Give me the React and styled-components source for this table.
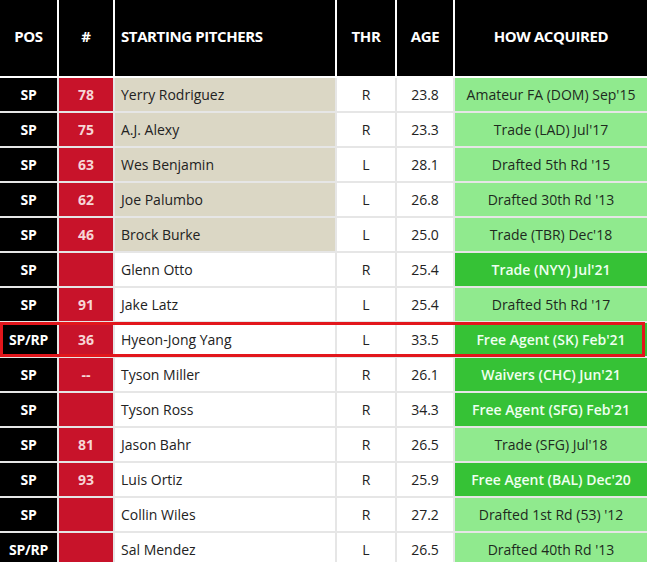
import React from "react";
import styled, { createGlobalStyle } from "styled-components";

const GlobalStyle = createGlobalStyle`
  html, body { margin: 0; padding: 0; background: #ffffff; overflow: hidden; }
  body { font-family: "Open Sans", "Noto Sans", "Liberation Sans", sans-serif; }
`;

const COLS = "57px 54px 220px 58px 56px 192px";

const Table = styled.div`
  width: 647px;
  display: flex;
  flex-direction: column;
  gap: 2px;
  background: #ffffff;
`;

const HeaderRow = styled.div`
  display: grid;
  grid-template-columns: ${COLS};
  column-gap: 2px;
  height: 76px;
  background: #ffffff;
`;

const HeadCell = styled.div`
  background: #000000;
  color: #ffffff;
  font-weight: 700;
  font-size: 15px;
  letter-spacing: -0.4px;
  display: flex;
  align-items: center;
  padding-bottom: 5px;
  box-sizing: border-box;
  justify-content: ${(p) => (p.$left ? "flex-start" : "center")};
  padding-left: ${(p) => (p.$left ? "6px" : "0")};
`;

const Body = styled.div`
  display: flex;
  flex-direction: column;
  gap: 2px;
  background: #e6e6e6;
`;

const Row = styled.div`
  position: relative;
  display: grid;
  grid-template-columns: ${COLS};
  column-gap: 2px;
  height: 33px;
  background: #e6e6e6;
  &::after {
    content: "";
    display: ${(p) => (p.$highlight ? "block" : "none")};
    position: absolute;
    left: 0;
    right: 2px;
    top: -1px;
    bottom: -1px;
    border: 3px solid #e2161c;
    pointer-events: none;
  }
`;

const Cell = styled.div`
  display: flex;
  align-items: center;
  font-size: 14px;
  letter-spacing: 0;
  white-space: nowrap;
  overflow: hidden;
`;

const PosCell = styled(Cell)`
  background: #000000;
  color: #ffffff;
  font-weight: 700;
  letter-spacing: -0.3px;
  justify-content: center;
`;

const NumCell = styled(Cell)`
  background: #c8132a;
  color: #f6d6d6;
  font-weight: 700;
  justify-content: center;
`;

const NameCell = styled(Cell)`
  background: ${(p) => (p.$prospect ? "#dbd7c5" : "#ffffff")};
  color: #222222;
  padding-left: 6px;
`;

const CenterCell = styled(Cell)`
  background: #ffffff;
  color: #222222;
  justify-content: center;
`;

const HowCell = styled(Cell)`
  background: ${(p) => (p.$recent ? "#36c236" : "#90ea8e")};
  color: ${(p) => (p.$recent ? "#effff0" : "#1e2a1e")};
  font-weight: ${(p) => (p.$recent ? 600 : 400)};
  justify-content: center;
`;

const rows = [
  ["SP", "78", "Yerry Rodriguez", "R", "23.8", "Amateur FA (DOM) Sep'15", true, false],
  ["SP", "75", "A.J. Alexy", "R", "23.3", "Trade (LAD) Jul'17", true, false],
  ["SP", "63", "Wes Benjamin", "L", "28.1", "Drafted 5th Rd '15", true, false],
  ["SP", "62", "Joe Palumbo", "L", "26.8", "Drafted 30th Rd '13", true, false],
  ["SP", "46", "Brock Burke", "L", "25.0", "Trade (TBR) Dec'18", true, false],
  ["SP", "", "Glenn Otto", "R", "25.4", "Trade (NYY) Jul'21", false, true],
  ["SP", "91", "Jake Latz", "L", "25.4", "Drafted 5th Rd '17", false, false],
  ["SP/RP", "36", "Hyeon-Jong Yang", "L", "33.5", "Free Agent (SK) Feb'21", false, true, true],
  ["SP", "--", "Tyson Miller", "R", "26.1", "Waivers (CHC) Jun'21", false, true],
  ["SP", "", "Tyson Ross", "R", "34.3", "Free Agent (SFG) Feb'21", false, true],
  ["SP", "81", "Jason Bahr", "R", "26.5", "Trade (SFG) Jul'18", false, false],
  ["SP", "93", "Luis Ortiz", "R", "25.9", "Free Agent (BAL) Dec'20", false, true],
  ["SP", "", "Collin Wiles", "R", "27.2", "Drafted 1st Rd (53) '12", false, false],
  ["SP/RP", "", "Sal Mendez", "L", "26.5", "Drafted 40th Rd '13", false, false],
];

export default function App() {
  return (
    <>
      <GlobalStyle />
      <Table>
        <HeaderRow>
          <HeadCell>POS</HeadCell>
          <HeadCell>#</HeadCell>
          <HeadCell $left>STARTING PITCHERS</HeadCell>
          <HeadCell>THR</HeadCell>
          <HeadCell>AGE</HeadCell>
          <HeadCell>HOW ACQUIRED</HeadCell>
        </HeaderRow>
        <Body>
          {rows.map(([pos, num, name, thr, age, how, prospect, recent, hl]) => (
            <Row key={name} $highlight={hl}>
              <PosCell>{pos}</PosCell>
              <NumCell>{num}</NumCell>
              <NameCell $prospect={prospect}>{name}</NameCell>
              <CenterCell>{thr}</CenterCell>
              <CenterCell>{age}</CenterCell>
              <HowCell $recent={recent}>{how}</HowCell>
            </Row>
          ))}
        </Body>
      </Table>
    </>
  );
}
